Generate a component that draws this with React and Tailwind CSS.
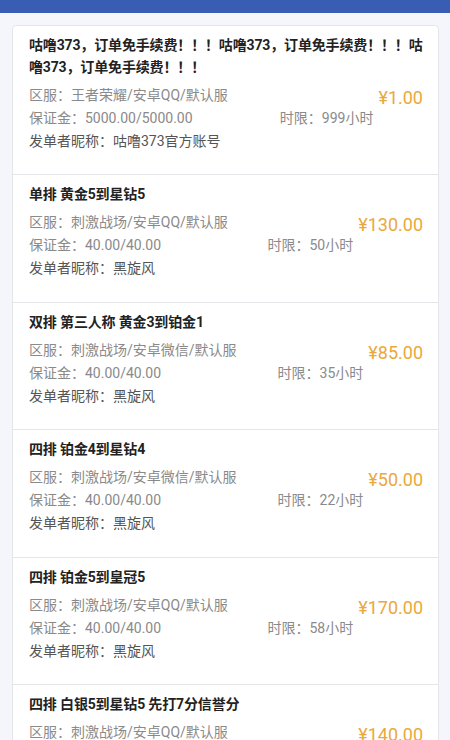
import React from "react";

const orders = [
  {
    title: "咕噜373，订单免手续费！！！咕噜373，订单免手续费！！！咕噜373，订单免手续费！！！",
    area: "王者荣耀/安卓QQ/默认服",
    deposit: "5000.00/5000.00",
    hours: "999",
    owner: "咕噜373官方账号",
    price: "1.00",
  },
  {
    title: "单排 黄金5到星钻5",
    area: "刺激战场/安卓QQ/默认服",
    deposit: "40.00/40.00",
    hours: "50",
    owner: "黑旋风",
    price: "130.00",
  },
  {
    title: "双排 第三人称 黄金3到铂金1",
    area: "刺激战场/安卓微信/默认服",
    deposit: "40.00/40.00",
    hours: "35",
    owner: "黑旋风",
    price: "85.00",
  },
  {
    title: "四排 铂金4到星钻4",
    area: "刺激战场/安卓微信/默认服",
    deposit: "40.00/40.00",
    hours: "22",
    owner: "黑旋风",
    price: "50.00",
  },
  {
    title: "四排 铂金5到皇冠5",
    area: "刺激战场/安卓QQ/默认服",
    deposit: "40.00/40.00",
    hours: "58",
    owner: "黑旋风",
    price: "170.00",
  },
  {
    title: "四排 白银5到星钻5 先打7分信誉分",
    area: "刺激战场/安卓QQ/默认服",
    deposit: "40.00/40.00",
    hours: "30",
    owner: "黑旋风",
    price: "140.00",
  },
];

const OrderItem = ({ order }) => (
  <div className="border-b border-[#e4e6ea] pl-4 pr-[15px] pt-2 pb-[21.4px] last:border-b-0">
    <div className="text-[14px] leading-[22px] font-bold tracking-[-0.15px] text-[#222]">
      {order.title}
    </div>
    <div className="mt-[6px] flex items-start gap-[5px]">
      <div className="flex-1 text-[14px] leading-[23px] text-[#8a8a8a]">
        <div>区服：{order.area}</div>
        <div className="flex justify-between">
          <span>保证金：{order.deposit}</span>
          <span>时限：{order.hours}小时</span>
        </div>
      </div>
      <div className="text-[18px] leading-[27px] text-[#eba83a]">
        ¥{order.price}
      </div>
    </div>
    <div className="text-[14px] leading-[23px] text-[#555]">
      发单者昵称：{order.owner}
    </div>
  </div>
);

export default function App() {
  return (
    <div
      className="h-[740px] overflow-hidden bg-[#f4f6fb]"
      style={{ fontFamily: 'Roboto, "Noto Sans CJK SC", sans-serif' }}
    >
      <div className="h-[13px] bg-[#395db2]" />
      <div className="ml-3 mr-[11px] mt-3 rounded border border-[#e4e6ea] bg-white">
        {orders.map((o, i) => (
          <OrderItem key={i} order={o} />
        ))}
      </div>
    </div>
  );
}
